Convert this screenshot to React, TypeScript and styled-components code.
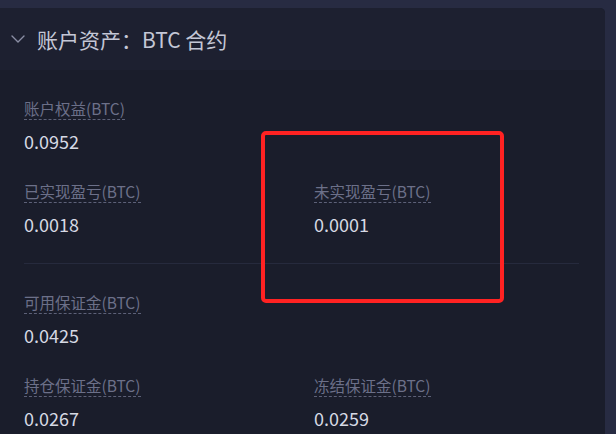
import React from "react";
import styled, { createGlobalStyle } from "styled-components";

const Global = createGlobalStyle`
  html, body {
    margin: 0;
    padding: 0;
    background: #272b42;
  }
  body {
    width: 616px;
    height: 434px;
    overflow: hidden;
    font-family: "Noto Sans CJK SC", "Noto Sans", sans-serif;
  }
`;

const Page = styled.div`
  position: relative;
  width: 616px;
  height: 434px;
  padding: 8px 11px 0 0;
  box-sizing: border-box;
  background: #272b42;
`;

const Card = styled.div`
  width: 605px;
  height: 100%;
  background: #1a1d2b;
  border-radius: 0 5px 0 0;
  overflow: hidden;
`;

const Header = styled.div`
  height: 62px;
  display: flex;
  align-items: center;
  gap: 12px;
  padding-left: 11px;
  background: #1d2030;
  color: #c4c7d6;
  font-size: 21px;
  line-height: 28px;
`;

const Body = styled.div`
  padding: 27px 26px 0 24px;
`;

const Grid = styled.div`
  display: grid;
  grid-template-columns: 290px 1fr;
  row-gap: 27px;
`;

const Divider = styled.div`
  height: 1px;
  background: #262a3d;
  margin: 27px 0;
`;

const Item = styled.div`
  display: flex;
  flex-direction: column;
  align-items: flex-start;
`;

const Label = styled.span`
  font-size: 15.5px;
  line-height: 22px;
  color: #6c7089;
  border-bottom: 1px dashed #5d6178;
`;

const Value = styled.span`
  margin-top: 9px;
  font-size: 18px;
  line-height: 24px;
  color: #d6d9e4;
`;

const Highlight = styled.div`
  position: absolute;
  left: 261px;
  top: 131px;
  width: 243px;
  height: 172px;
  box-sizing: border-box;
  border: 4px solid #ff2222;
  border-radius: 5px;
  pointer-events: none;
`;

const Chevron = () => (
  <svg width="14" height="8" viewBox="0 0 14 8" fill="none">
    <path d="M1 1l6 6 6-6" stroke="#8a8ea4" strokeWidth="1.4" strokeLinecap="round" strokeLinejoin="round" />
  </svg>
);

type Cell = { label: string; value: string } | null;

const Field = ({ cell }: { cell: Cell }) =>
  cell ? (
    <Item>
      <Label>{cell.label}</Label>
      <Value>{cell.value}</Value>
    </Item>
  ) : (
    <div />
  );

const top: Cell[] = [
  { label: "账户权益(BTC)", value: "0.0952" },
  null,
  { label: "已实现盈亏(BTC)", value: "0.0018" },
  { label: "未实现盈亏(BTC)", value: "0.0001" },
];

const bottom: Cell[] = [
  { label: "可用保证金(BTC)", value: "0.0425" },
  null,
  { label: "持仓保证金(BTC)", value: "0.0267" },
  { label: "冻结保证金(BTC)", value: "0.0259" },
];

export default function App() {
  return (
    <>
      <Global />
      <Page>
        <Card>
          <Header>
            <Chevron />
            <span>账户资产：BTC 合约</span>
          </Header>
          <Body>
            <Grid>
              {top.map((c, i) => (
                <Field key={i} cell={c} />
              ))}
            </Grid>
            <Divider />
            <Grid>
              {bottom.map((c, i) => (
                <Field key={i} cell={c} />
              ))}
            </Grid>
          </Body>
        </Card>
        <Highlight />
      </Page>
    </>
  );
}
